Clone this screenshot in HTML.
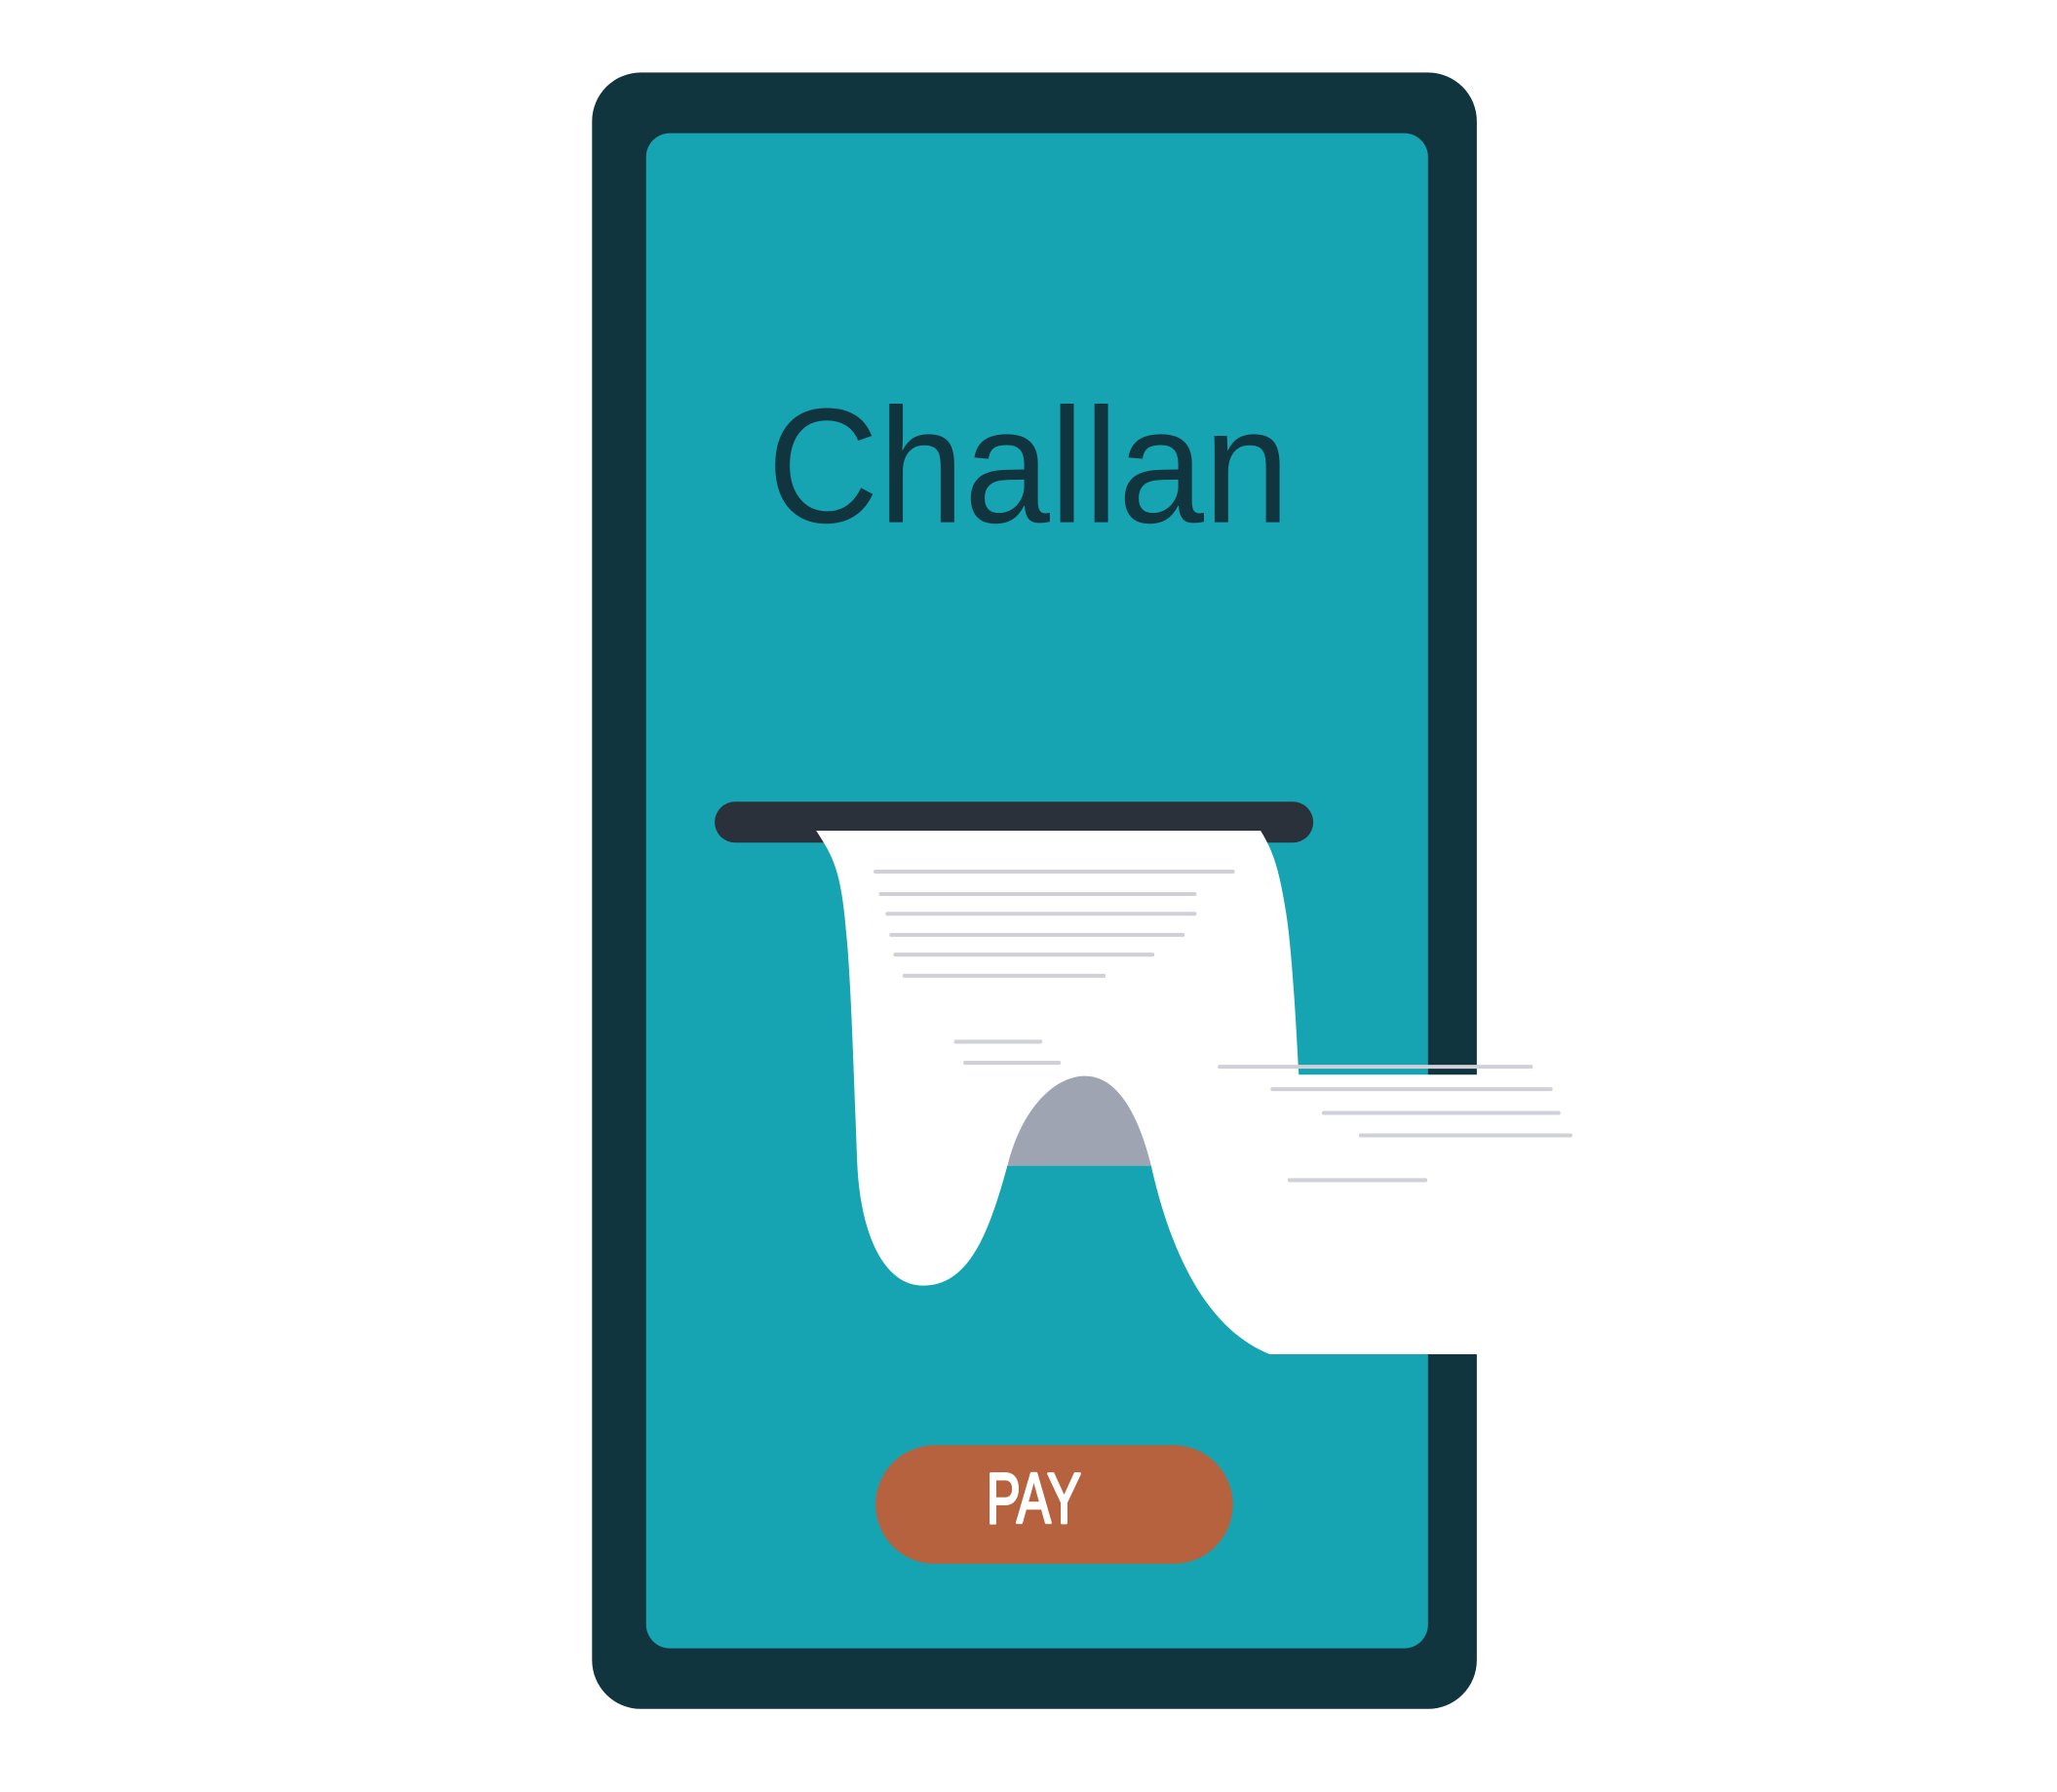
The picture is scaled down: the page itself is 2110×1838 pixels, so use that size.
<!DOCTYPE html>
<html><head><meta charset="utf-8"><style>
html,body{margin:0;padding:0;background:#fff;width:2110px;height:1838px;overflow:hidden}
svg{display:block}
</style></head><body>
<svg width="2110" height="1838" viewBox="0 0 1560 1359" preserveAspectRatio="none" xmlns="http://www.w3.org/2000/svg">
<rect x="449" y="55" width="671" height="1241" rx="37" fill="#10353f"/>
<rect x="490" y="101" width="593" height="1149" rx="18" fill="#16a4b3"/>
<text x="582" y="396" font-family="Liberation Sans, sans-serif" font-size="124" fill="#10353f" textLength="396" lengthAdjust="spacingAndGlyphs">Challan</text>
<rect x="542" y="608" width="454" height="31" rx="15.5" fill="#2b313b"/>
<path d="M619,630 L956,630 C966,646 970,660 975,690 C980,720 983,780 985,815 L1560,815 L1560,1027 L963,1027 C920,1010 890,960 873,884 L764,884 C750,935 735,975 700,975 C670,975 652,935 650,880 C647,800 645,740 642,710 C638,660 632,650 619,630 Z" fill="#fff"/>
<path d="M764,884 C775,840 800,816 823,816 C845,816 862,840 873,884 Z" fill="#9ea4b2"/>
<g stroke="#cfd0d8" stroke-width="3" stroke-linecap="round">
<line x1="664" y1="661" x2="935" y2="661"/>
<line x1="668" y1="678" x2="906" y2="678"/>
<line x1="673" y1="693" x2="906" y2="693"/>
<line x1="676" y1="709" x2="897" y2="709"/>
<line x1="679" y1="724" x2="874" y2="724"/>
<line x1="686" y1="740" x2="837" y2="740"/>
<line x1="725" y1="790" x2="789" y2="790"/>
<line x1="732" y1="806" x2="803" y2="806"/>
<line x1="925" y1="809" x2="1161" y2="809"/>
<line x1="965" y1="826" x2="1176" y2="826"/>
<line x1="1004" y1="844" x2="1182" y2="844"/>
<line x1="1032" y1="861" x2="1191" y2="861"/>
<line x1="978" y1="895" x2="1081" y2="895"/>
</g>
<rect x="664" y="1096" width="271" height="90" rx="45" fill="#b6623f"/>
<text x="748" y="1155" font-family="Liberation Sans, sans-serif" font-size="54" fill="#fff" stroke="#fff" stroke-width="2" stroke-linejoin="round" textLength="72" lengthAdjust="spacingAndGlyphs">PAY</text>
</svg>
</body></html>
